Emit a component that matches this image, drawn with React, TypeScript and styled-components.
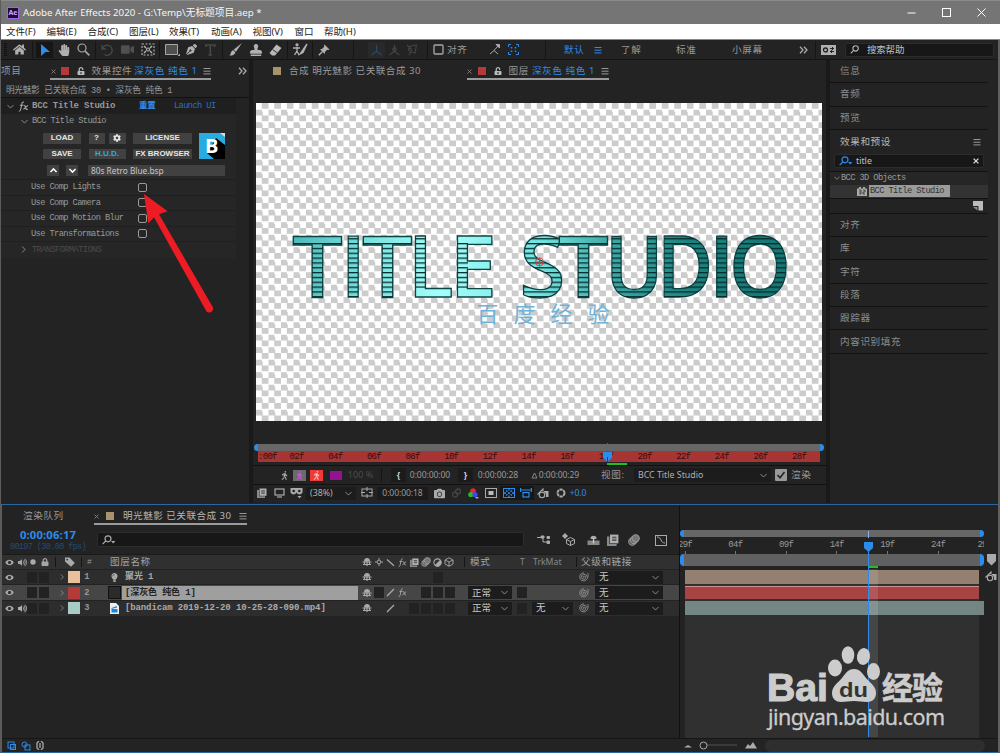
import React from 'react';
import styled, { createGlobalStyle } from 'styled-components';
import { FaHome, FaHandPaper, FaVideo, FaPenNib, FaStamp, FaCog, FaWalking, FaCamera, FaTag, FaLock, FaUnlockAlt, FaVolumeUp, FaLightbulb } from 'react-icons/fa';

const ui = `'Noto Sans','Noto Sans CJK SC',sans-serif`;
const mono = `'Liberation Mono','Noto Sans CJK SC',monospace`;
const blue = '#2d8ceb';

const Global = createGlobalStyle`
  *{box-sizing:border-box}
  body{margin:0;background:#232323;overflow:hidden}
  svg{flex:none;display:block}
`;

const Window = styled.div`
  position:relative;width:1000px;height:753px;background:#232323;color:#999;
  font:9.5px/12px ${ui};display:flex;flex-direction:column;white-space:nowrap;overflow:hidden;
  border-left:1px solid #5c5c5c;
`;
const TitleBar = styled.header`
  height:24px;flex:none;background:#757575;border-top:1px solid #8a8a8a;color:#f4f4f4;
  display:flex;align-items:center;padding:0 14px 0 6px;font-size:9.7px;gap:4px;
`;
const AppBadge = styled.span`
  width:12px;height:12px;border:1px solid #9a6be0;background:#1f0a3d;color:#c9a4ff;
  font-size:7px;font-weight:700;line-height:9px;text-align:center;
`;
const WindowButtons = styled.div`
  margin-left:auto;display:flex;gap:26px;align-items:center;
`;
const MenuBar = styled.nav`
  height:16px;flex:none;background:#fff;border-bottom:1px solid #888;color:#222;
  display:flex;align-items:center;padding-left:5px;line-height:15px;
`;
const MenuItem = styled.span<{ $w: number }>`width:${p => p.$w}px;flex:none;`;
const ToolBar = styled.div`
  height:20px;flex:none;display:flex;align-items:center;border-bottom:1px solid #151515;padding-left:0;
`;
const Cell = styled.span<{ $w: number; $start?: boolean; $c?: string; $bg?: string; $h?: number }>`
  width:${p => p.$w}px;height:${p => p.$h ? p.$h + 'px' : 'auto'};flex:none;display:flex;align-items:center;
  justify-content:${p => (p.$start ? 'flex-start' : 'center')};
  color:${p => p.$c || 'inherit'};background:${p => p.$bg || 'transparent'};
`;
const Gap = styled.i<{ $h: number }>`height:${p => p.$h}px;flex:none;`;
const Sep = styled.i<{ $l: number; $r: number; $h?: number }>`
  width:1px;height:${p => p.$h || 18}px;flex:none;background:#151515;margin:0 ${p => p.$r}px 0 ${p => p.$l}px;
`;
const Wide = styled.span<{ $ls?: number; $c?: string; $size?: number; $bold?: boolean; $ml?: number; $grow?: boolean }>`
  letter-spacing:${p => p.$ls ?? 0.6}px;color:${p => p.$c || 'inherit'};
  font-size:${p => p.$size || 9.6}px;font-weight:${p => (p.$bold ? 700 : 400)};
  margin-left:${p => p.$ml || 0}px;flex:${p => (p.$grow ? '1' : 'none')};
`;
const Mono = styled.span<{ $c?: string; $bold?: boolean; $ls?: number; $size?: number }>`
  font-family:${mono};font-size:${p => p.$size || 8.7}px;letter-spacing:${p => p.$ls ?? -0.59}px;
  color:${p => p.$c || '#999'};font-weight:${p => (p.$bold ? 700 : 400)};
`;
const SearchBox = styled.div<{ $w: number; $h: number; $mt?: number }>`
  width:${p => p.$w}px;height:${p => p.$h}px;flex:none;background:#171717;border:1px solid #2c2c2c;border-radius:2px;
  display:flex;align-items:center;padding:0 4px;color:#c2c2c2;margin-top:${p => p.$mt || 0}px;
`;
const Panels = styled.div`
  height:443px;flex:none;display:flex;gap:4px;background:#191919;
`;
const Panel = styled.section<{ $w: number }>`
  width:${p => p.$w}px;flex:none;background:#232323;display:flex;flex-direction:column;overflow:hidden;
`;
const TabRow = styled.div<{ $h: number }>`height:${p => p.$h}px;flex:none;display:flex;align-items:stretch;`;
const Tab = styled.div<{ $w: number; $ml?: number; $active?: boolean }>`
  width:${p => p.$w}px;margin-left:${p => p.$ml || 0}px;flex:none;display:flex;align-items:center;padding-top:4px;
  border-bottom:2px solid ${p => (p.$active ? '#9b9b9b' : 'transparent')};
`;
const Swatch = styled.i<{ $c: string; $s?: number; $ml?: number; $mr?: number }>`
  width:${p => p.$s || 8}px;height:${p => p.$s || 8}px;flex:none;background:${p => p.$c};
  margin:0 ${p => p.$mr || 0}px 0 ${p => p.$ml || 0}px;
`;

/* Effect controls */
const Crumb = styled.div`height:18px;flex:none;padding:4px 0 0 5px;border-bottom:1px solid #111;`;
const FxRow = styled.div<{ $h: number; $bg?: string; $pl?: number; $line?: boolean }>`
  height:${p => p.$h}px;width:235px;flex:none;display:flex;align-items:center;padding-left:${p => p.$pl || 0}px;
  background:${p => p.$bg || '#262626'};border-bottom:${p => (p.$line ? '1px solid #1f1f1f' : '0')};
`;
const Deck = styled.div`
  width:235px;height:52px;flex:none;background:#262626;display:grid;padding:5px 0 0 42px;border-bottom:1px solid #1f1f1f;
  grid-template-columns:149px 26px;column-gap:7px;grid-template-rows:26px 11px;row-gap:6px;
`;
const DeckButtons = styled.div`display:flex;flex-direction:column;justify-content:space-between;`;
const DeckLine = styled.div`display:flex;justify-content:space-between;`;
const Btn = styled.button<{ $w: number; $c?: string; $ml?: number }>`
  width:${p => p.$w}px;height:10.5px;padding:0;border:0;background:#414141;color:${p => p.$c || '#e6e6e6'};
  font:bold 8px/10px 'Liberation Sans',sans-serif;display:flex;align-items:center;justify-content:center;
  margin:0 0 0 ${p => p.$ml || 0}px;
`;
const Pair = styled.div`display:flex;gap:4px;`;
const DeckField = styled.div`display:flex;align-items:center;grid-column:1 / 3;padding-left:4px;`;
const FileName = styled.span`
  width:137px;height:11px;margin-left:10px;background:#414141;color:#c9c9c9;padding-left:3px;line-height:11px;font-size:8.3px;
`;
const Check = styled.i`width:9px;height:9px;flex:none;border:1px solid #9a9a9a;border-radius:2px;`;

/* Viewer */
const Stage = styled.div`
  width:566px;height:318px;margin:23px 0 0 3px;flex:none;
  background:#fff conic-gradient(#ccc 25%,#fff 0 50%,#ccc 0 75%,#fff 0) 0 0/12.500px 12.500px;
`;
const MiniScroll = styled.div<{ $ml: number; $w: number; $h: number; $bg?: string }>`
  margin-left:${p => p.$ml}px;width:${p => p.$w}px;height:${p => p.$h}px;flex:none;display:flex;background:${p => p.$bg || '#676767'};
  border:solid ${blue};border-width:0 4px;border-radius:4px;
`;
const RedRuler = styled.div`
  width:562px;height:11px;margin-left:5px;flex:none;background:#a63533;display:flex;overflow:hidden;
`;
const RulerMark = styled.span<{ $w: number; $start?: boolean }>`
  width:${p => p.$w}px;flex:none;display:flex;justify-content:${p => (p.$start ? 'flex-start' : 'center')};
  font:9px/12px ${mono};letter-spacing:-.7px;color:#330f0f;
`;
const Bar = styled.div<{ $h: number }>`
  height:${p => p.$h}px;flex:none;display:flex;align-items:center;border-top:1px solid #111;font-size:8.8px;
`;
const Select = styled.span<{ $w: number; $ml?: number; $h?: number; $c?: string }>`
  width:${p => p.$w}px;height:${p => p.$h || 13}px;margin-left:${p => p.$ml || 0}px;flex:none;background:#1c1c1c;
  display:flex;align-items:center;justify-content:space-between;padding:0 4px;color:${p => p.$c || '#b0b0b0'};
`;

/* Side panels */
const SideRow = styled.div<{ $h?: number; $bright?: boolean; $plain?: boolean }>`
  height:${p => p.$h || 23.3}px;width:158px;flex:none;display:flex;align-items:center;padding-left:10px;
  border-bottom:${p => (p.$plain ? '0' : '1px solid #121212')};color:${p => (p.$bright ? '#b5b5b5' : '#8c8c8c')};
`;
const SideSearch = styled.div`padding:0 0 3px 4px;border-bottom:1px solid #121212;width:158px;`;
const SideFoot = styled.div`
  height:16px;width:158px;flex:none;display:flex;align-items:center;justify-content:flex-end;padding-right:5px;
  border:solid #121212;border-width:1px 0;
`;
const TreeRow = styled.div<{ $bg?: string }>`
  height:13px;width:158px;flex:none;display:flex;align-items:center;padding-left:4px;background:${p => p.$bg || '#262626'};
`;
const Hit = styled.span`background:#9b9b9b;height:12px;width:81px;padding-left:1px;display:flex;align-items:center;margin-left:2px;`;

/* Timeline */
const Timeline = styled.section`
  height:249px;width:998px;flex:none;margin-top:1px;border:1.5px solid #2b67a5;display:flex;flex-direction:column;
  background:#232323;position:relative;
`;
const TLBody = styled.div`display:flex;flex:1;min-height:0;`;
const Outline = styled.div`width:678px;flex:none;display:flex;flex-direction:column;border-right:1px solid #111;`;
const TimeTop = styled.div`height:29px;flex:none;display:flex;`;
const TimeCode = styled.div`width:92px;flex:none;text-align:center;display:flex;flex-direction:column;padding-top:4px;`;
const Header = styled.div`
  height:15px;flex:none;display:flex;align-items:center;background:#303030;border-top:1px solid #1a1a1a;color:#a5a5a5;
`;
const Layers = styled.div`display:flex;flex-direction:column;padding-top:.8px;background:#222;`;
const LayerRow = styled.div<{ $sel?: boolean }>`
  height:15.6px;flex:none;display:flex;align-items:center;background:${p => (p.$sel ? '#464646' : '#2d2d2d')};
  border-bottom:1px solid #222;color:#b0b0b0;
`;
const Box = styled.i<{ $r?: number }>`
  width:10px;height:11px;flex:none;background:#222;margin-right:${p => p.$r || 0}px;
`;
const LayerName = styled.span<{ $sel?: boolean }>`
  width:236px;height:14px;flex:none;display:flex;align-items:center;padding-left:3px;
  background:${p => (p.$sel ? '#9f9f9f' : 'transparent')};
`;
const Tracks = styled.div`width:304px;flex:none;display:flex;flex-direction:column;padding-top:25px;`;
const TickRow = styled.div`height:14px;flex:none;display:flex;overflow:hidden;margin-top:3px;`;
const Tick = styled.span<{ $w: number }>`
  width:${p => p.$w}px;flex:none;display:flex;flex-direction:column;align-items:center;
  font:9px/11px ${mono};letter-spacing:-.7px;color:#999;
  &::after{content:'';width:1px;height:3px;background:#777;}
`;
const TrackArea = styled.div`
  flex:1;margin:4px 5px 0 5px;background:#303030;display:flex;flex-direction:column;
`;
const Clip = styled.div<{ $c: string; $w: number; $top?: string }>`
  height:13.6px;width:${p => p.$w}px;flex:none;margin-bottom:2px;background:${p => p.$c};
  border-top:1px solid ${p => p.$top || 'transparent'};
`;
const Markers = styled.div`
  width:14px;flex:none;display:flex;flex-direction:column;align-items:center;padding-top:49px;gap:5px;
`;
const Footer = styled.div`height:14px;flex:none;display:flex;align-items:center;border-top:1px solid #161616;`;
const Scroll = styled.span`width:220px;height:12px;border-radius:6px;background:#2e2e2e;`;
const Overlay = styled.svg<{ $x: number; $y: number }>`position:absolute;left:${p => p.$x}px;top:${p => p.$y}px;pointer-events:none;`;

const Chevron = ({ c = '#999', s = 7, dir = 'down', w = 1 }: { c?: string; s?: number; dir?: 'down' | 'right' | 'up'; w?: number }) => (
  <svg width={s} height={s} viewBox="0 0 8 8" fill="none" stroke={c} strokeWidth={w}>
    <path d={dir === 'down' ? 'M.5 2.2 4 5.8 7.5 2.2' : dir === 'up' ? 'M.5 5.8 4 2.2 7.5 5.8' : 'M2.4.6 5.8 4 2.4 7.4'} />
  </svg>
);
const Burger = ({ c = '#999' }: { c?: string }) => (
  <svg width="8" height="8" viewBox="0 0 8 8" stroke={c}><path d="M.5 1.5h7M.5 4.2h7M.5 6.9h7" /></svg>
);
const Cross = ({ c = '#888', s = 5, w = 1 }: { c?: string; s?: number; w?: number }) => (
  <svg width={s} height={s} viewBox="0 0 6 6" stroke={c} strokeWidth={w}><path d="M.6.6l4.8 4.8M5.4.6.6 5.4" /></svg>
);
const Lens = ({ c = '#bbb', s = 10, caret = false }: { c?: string; s?: number; caret?: boolean }) => (
  <svg width={s + 4} height={s} viewBox="0 0 14 10" fill="none" stroke={c} strokeWidth="1.2">
    <circle cx="6" cy="3.8" r="3" /><path d="M3.8 6 .6 9.2" />
    {caret && <path d="M9 6h4.4L11.2 8.4z" fill={c} stroke="none" />}
  </svg>
);
const More = () => (
  <svg width="9" height="8" viewBox="0 0 9 8" fill="none" stroke="#aaa" strokeWidth="1.3"><path d="M1 .8 4 4 1 7.2M5 .8 8 4 5 7.2" /></svg>
);
const Axis = ({ c, k }: { c: string; k: number }) => (
  <svg width="13" height="12" viewBox="0 0 13 12" fill="none" stroke={c} strokeWidth="1.1">
    {k < 2 ? <path d="M6.5 1v6.2M6.5 7.2 1.5 11M6.5 7.2l5 3.8" /> : <path d="M3 2.5 10.5 1 9 9 2.5 6.5zM1 1l5 5M3 11l3-5" />}
    {k === 1 && <circle cx="6.5" cy="5.5" r="1.8" />}
  </svg>
);
const Shy = ({ s = 10 }: { s?: number }) => (
  <svg width={s} height={s} viewBox="0 0 10 10">
    <path d="M2 4.600C1.800 2.200 3 1 5 1s3.200 1.200 3 3.600z" fill="#aaa" /><path d="M.5 5h9M5 4v5M1 7.500h8M2.500 5v2.500M7.500 5v2.500" fill="none" stroke="#aaa" strokeWidth="1.200" />
  </svg>
);
const ShyRow = () => (
  <svg width="13" height="10" viewBox="0 0 13 10">
    <path d="M3.500 4C3.300 2 4.500.8 6.500.8S9.700 2 9.500 4z" fill="#aaa" /><path d="M.5 5.500h12V10H.5z" fill="#888" /><path d="M6.500 3v5.500" stroke="#ccc" strokeWidth="1.300" />
  </svg>
);
const Frames = ({ s = 10 }: { s?: number }) => (
  <svg width={s} height={s} viewBox="0 0 10 10"><path d="M0 2h2v6.300h6V10H0z" fill="#8a8a8a" /><path d="M2.500.5h7v7.300h-7z" fill="#b0b0b0" /><path d="M4.300 2.200h3.500v3.600H4.300z" fill="#555" /><path d="M4.300 4h3.500" stroke="#b0b0b0" strokeWidth=".8" /></svg>
);
const Blur = ({ s = 10 }: { s?: number }) => (
  <svg width={s} height={s} viewBox="0 0 10 10" stroke="#999" strokeWidth=".9"><circle cx="3.600" cy="6.400" r="3" fill="#555" /><circle cx="5" cy="5" r="3" fill="#666" /><circle cx="6.400" cy="3.600" r="3" fill="#777" /></svg>
);
const Half = () => (
  <svg width="9" height="9" viewBox="0 0 10 10"><circle cx="5" cy="5" r="4" fill="none" stroke="#aaa" strokeWidth="1.2" /><path d="M2 8a4 4 0 0 0 6-6z" fill="#aaa" /></svg>
);
const Cube = ({ s = 10 }: { s?: number }) => (
  <svg width={s} height={s} viewBox="0 0 10 10" fill="none" stroke="#aaa" strokeWidth=".9"><path d="M5 .8 9 3v4L5 9.3 1 7V3zM1 3l4 2 4-2M5 5v4.2" /></svg>
);
const Slash = ({ flip = false }: { flip?: boolean }) => (
  <svg width="9" height="9" viewBox="0 0 9 9" stroke="#aaa" strokeWidth="1.2"><path d={flip ? 'M1 1.5 8 7.8' : 'M1 8 8 1'} /></svg>
);
const Sun = () => (
  <svg width="8" height="8" viewBox="0 0 9 9" fill="none" stroke="#aaa" strokeWidth="1.100"><circle cx="4.500" cy="4.500" r="2.100" /><path d="M4.500 0v2M4.500 7v2M0 4.500h2M7 4.500h2" /></svg>
);
const Spiral = () => (
  <svg width="10" height="10" viewBox="0 0 10 10" fill="none" stroke="#999" strokeWidth=".9">
    <path d="M5.2 5.4c-.8.4-1.4-.8-.4-1.2 1.4-.5 2.4 1 1.6 2.2-1 1.4-3.6.9-3.8-1.2C2.4 3 4.400 1.800 6.200 2.400c1 .4 1.600 1.200 1.700 2.300M8.900 1.200c.8 3.800-.8 7.600-4.400 7.600C2 8.800.7 6.800.8 4.800.900 2.600 2.600.800 5 .8" />
  </svg>
);
const Fx = ({ s = 11, c = '#aaa' }: { s?: number; c?: string }) => (
  <svg width={s} height={s} viewBox="0 0 11 11" fill="none" stroke={c} strokeWidth="1.1">
    <path d="M.8 10.300c1.400.2 1.700-1 2-2.300l1-5c.3-1.400.8-2.300 2.200-1.900M1.800 4.200h3.400M5.600 4.300c1.500-.3 1.700.7 2 2.100s.6 2.300 2.200 1.900M10 4.400 5.400 8.400" />
  </svg>
);
const Aperture = () => (
  <svg width="10" height="10" viewBox="0 0 10 10" fill="none" stroke="#aaa"><circle cx="5" cy="5" r="3.500" strokeWidth="2" strokeDasharray="3.100 .56" /></svg>
);
const Recycle = () => (
  <svg width="12" height="11" viewBox="0 0 12 11" fill="none" stroke="#aaa" strokeWidth="1.100"><circle cx="5" cy="7" r="2.700" /><path d="M.5 6.500 6 1v2.500" /><path d="M7 3h4.500v6H8.700A4 4 0 0 0 7 4z" fill="#aaa" stroke="none" /></svg>
);
const Eye = () => (
  <svg width="9" height="7" viewBox="0 0 9 7"><path d="M.3 3.500C2-.2 7-.2 8.700 3.500 7 7.200 2 7.200.3 3.500z" fill="#aaa" /><circle cx="4.500" cy="3.500" r="1.700" fill="#333" /></svg>
);

const menu: [string, number][] = [['文件(F)', 40.500], ['编辑(E)', 41], ['合成(C)', 41.500], ['图层(L)', 40], ['效果(T)', 42], ['动画(A)', 41.500], ['视图(V)', 42], ['窗口', 29.500], ['帮助(H)', 40]];

const Tools = () => (
  <ToolBar>
    <Cell $w={9}><svg width="3" height="14"><path d="M1.500 0v14" stroke="#111" strokeWidth="3" strokeDasharray="1 1" /></svg></Cell>
    <Cell $w={19}><FaHome size={13} color="#b0b0b0" /></Cell>
    <Sep $l={3} $r={3} />
    <Cell $w={17} $h={16} $bg="#161616"><svg width="10" height="12" viewBox="0 0 10 12"><path d="M1 0l9 8H5.500L1 12z" fill={blue} /></svg></Cell>
    <Cell $w={21}><FaHandPaper size={12} color="#b0b0b0" /></Cell>
    <Cell $w={19}><svg width="13" height="13" viewBox="0 0 13 13" fill="none" stroke="#a8a8a8"><circle cx="5" cy="5" r="4" strokeWidth="1.200" /><path d="M8 8l4.300 4.300" strokeWidth="1.700" /></svg></Cell>
    <Sep $l={2} $r={2} />
    <Cell $w={19}><svg width="13" height="12" viewBox="0 0 13 12" fill="none" stroke="#484848" strokeWidth="1.300"><path d="M1 1v4h4M1.500 4.500a5 5 0 1 1 2 6" /></svg></Cell>
    <Cell $w={21}><FaVideo size={13} color="#505050" /></Cell>
    <Cell $w={19}><svg width="14" height="13" viewBox="0 0 14 13" fill="none" stroke="#b0b0b0" strokeWidth="1.200"><rect x="1" y="1" width="12" height="11" strokeDasharray="2 1.500" /><circle cx="7" cy="6.500" r="1.500" /><path d="M3 3l2 2M11 3 9 5M3 10l2-2M11 10 9 8" strokeWidth="1.500" /></svg></Cell>
    <Sep $l={2} $r={2} />
    <Cell $w={20}><svg width="15" height="12" viewBox="0 0 15 12"><path d="M.5.500h12v10H.5z" fill="#505050" stroke="#a8a8a8" /><path d="M15 9.500V12h-2.500z" fill="#a8a8a8" /></svg></Cell>
    <Cell $w={19}><FaPenNib size={11} color="#b0b0b0" /></Cell>
    <Cell $w={19}><svg width="12" height="12" viewBox="0 0 12 12" stroke="#484848" strokeWidth="1.600" fill="none"><path d="M.8 3V1h9v2M5.300 1v10M3.500 11h3.600" /></svg></Cell>
    <Sep $l={2} $r={2} />
    <Cell $w={21}><svg width="13" height="13" viewBox="0 0 13 13" fill="#b0b0b0"><path d="M13 0 7 8.800 4.600 6.700z" /><path d="M4.200 7.200 6.400 9.200C6 11.700 3.500 12.700.3 12.500 2.300 11 1.600 7.600 4.200 7.200z" /></svg></Cell>
    <Cell $w={19}><FaStamp size={12} color="#b0b0b0" /></Cell>
    <Cell $w={20}><svg width="13" height="12" viewBox="0 0 13 12"><path d="M7.500.5 12.500 4 6 11.500H3L.5 9z" fill="#b8b8b8" /><path d="M3.500 5.500 8.500 9" stroke="#333" /></svg></Cell>
    <Sep $l={2} $r={2} />
    <Cell $w={20}><svg width="15" height="13" viewBox="0 0 15 13" fill="none" stroke="#b0b0b0" strokeWidth="1.300"><circle cx="4" cy="1.800" r="1" fill="#b0b0b0" /><path d="M0 5h7M4 4v4L1.500 12M4 8l2 4" /><path d="M14 1 9 8l-2 3 3-1.500z" fill="#b0b0b0" /></svg></Cell>
    <Sep $l={2} $r={2} />
    <Cell $w={18}><svg width="12" height="12" viewBox="0 0 12 12"><path d="M6.500.5l5 5-1.200.5-1.200-.2L7 8l-.2 2L2 5.200 4 5l2.200-2.200L6 1.500z" fill="#b0b0b0" /><path d="M4.500 7.500.8 11.200" stroke="#b0b0b0" strokeWidth="1.300" /></svg></Cell>
    <Sep $l={20} $r={14} />
    <Cell $w={17} $h={16} $bg="#292929"><Axis c="#274a6e" k={0} /></Cell>
    <Cell $w={18}><Axis c="#454545" k={1} /></Cell>
    <Cell $w={18}><Axis c="#454545" k={2} /></Cell>
    <Sep $l={6} $r={5} />
    <Cell $w={11}><svg width="11" height="11"><rect x="1" y="1" width="9" height="9" rx="1" fill="none" stroke="#a8a8a8" strokeWidth="1.300" /></svg></Cell>
    <Cell $w={43} $start><Wide $ml={3}>对齐</Wide></Cell>
    <Cell $w={15}><svg width="11" height="11" viewBox="0 0 11 11" fill="none" stroke="#a8a8a8"><path d="M1 10l4-3.500 4 3.500M5 6.500 9 2" /><path d="M7 .5h3.500V4z" fill="#a8a8a8" /></svg></Cell>
    <Cell $w={22}><svg width="11" height="11" viewBox="0 0 11 11" fill="none" stroke={blue}><path d="M3 .5H.5V3M8 .5h2.500V3M3 10.500H.5V8M8 10.500h2.500V8" /><path d="M3.500 3v5.500M7.500 3v5.500" strokeWidth="1.500" strokeDasharray="1.500 2" /></svg></Cell>
    <Sep $l={21} $r={18} />
    <Cell $w={30} $start $c={blue}><Wide>默认</Wide></Cell>
    <Cell $w={27} $start><Burger c={blue} /></Cell>
    <Cell $w={55} $start><Wide>了解</Wide></Cell>
    <Cell $w={56} $start><Wide>标准</Wide></Cell>
    <Cell $w={67} $start><Wide>小屏幕</Wide></Cell>
    <Cell $w={9}><More /></Cell>
    <Sep $l={7} $r={4} />
    <Cell $w={16}><svg width="15" height="10" viewBox="0 0 15 10"><rect width="15" height="10" fill="#b0b0b0" /><circle cx="4.500" cy="5" r="2" fill="none" stroke="#222" strokeWidth="1.300" /><path d="M9 3.500h4M9 6.500h4M11.500 2v3M10.500 5v3" stroke="#222" /></svg></Cell>
    <Cell $w={9} />
    <SearchBox $w={149} $h={14}><Lens s={9} /><Wide $ls={-0.2} $size={9.500} $ml={4}>搜索帮助</Wide></SearchBox>
  </ToolBar>
);

const EffectControls = () => (
  <Panel $w={248}>
    <TabRow $h={20}>
      <Tab $w={49}><Wide>项目</Wide></Tab>
      <Tab $w={161} $active>
        <Cell $w={6}><Cross /></Cell><Swatch $c="#b33a38" $ml={5} $mr={8} /><FaUnlockAlt size={8} color="#bbb" />
        <Wide $ml={6.500}>效果控件</Wide><Wide $c={blue} $ml={2} $grow>深灰色 纯色 1</Wide><Burger />
      </Tab>
      <Tab $w={38}><Cell $w={62}><More /></Cell></Tab>
    </TabRow>
    <Crumb><Mono $size={8.600} $ls={-0.240}>明光魅影 已关联合成 30 • 深灰色 纯色 1</Mono></Crumb>
    <FxRow $h={16} $bg="#1f1f1f" $pl={5}>
      <Cell $w={9}><Chevron /></Cell><Cell $w={17}><Fx /></Cell>
      <Cell $w={107} $start><Mono $bold $size={9} $ls={-0.200}>BCC Title Studio</Mono></Cell>
      <Cell $w={35} $start><Mono $c={blue} $bold $size={8.500} $ls={-0.2}>重置</Mono></Cell><Mono $c="#2672c4">Launch UI</Mono>
    </FxRow>
    <FxRow $h={14} $pl={20}><Cell $w={11} $start><Chevron /></Cell><Mono>BCC Title Studio</Mono></FxRow>
    <Deck>
      <DeckButtons>
        <DeckLine><Btn $w={38}>LOAD</Btn><Pair><Btn $w={16}>?</Btn><Btn $w={17}><FaCog size={8} /></Btn></Pair><Btn $w={59}>LICENSE</Btn></DeckLine>
        <DeckLine><Btn $w={38}>SAVE</Btn><Btn $w={37} $c="#29abe2">H.U.D.</Btn><Btn $w={59}>FX BROWSER</Btn></DeckLine>
      </DeckButtons>
      <svg width="26" height="26" viewBox="0 0 26 26">
        <rect width="26" height="26" fill="#29abe2" /><path d="M17 5 26 12v14H15L8 20z" fill="#000" /><path d="M21 0h5v4z" fill="#ddd" />
        <text x="6" y="20" fontFamily="Open Sans" fontWeight="700" fontSize="20" fill="#fff">B</text>
      </svg>
      <DeckField>
        <Btn $w={12}><Chevron c="#fff" w={1.800} dir="up" /></Btn><Btn $w={12} $ml={7}><Chevron c="#fff" w={1.800} /></Btn>
        <FileName>80s Retro Blue.bsp</FileName>
      </DeckField>
    </Deck>
    {['Use Comp Lights', 'Use Comp Camera', 'Use Comp Motion Blur', 'Use Transformations'].map(t => (
      <FxRow key={t} $h={15.500} $pl={30} $line><Cell $w={107} $start><Mono>{t}</Mono></Cell><Check /></FxRow>
    ))}
    <FxRow $h={15.500} $pl={19}><Cell $w={12} $start><Chevron dir="right" /></Cell><Mono $c="#4a4a4a">TRANSFORMATIONS</Mono></FxRow>
  </Panel>
);

/* letter, x origin, horizontal scale */
const letters: [string, number, number][] = [
  ['T', 292, 1.060], ['I', 340.200, 1], ['T', 362, 1.060], ['L', 407.500, 1], ['E', 449.500, 1], ['S', 519.500, 0.980],
  ['T', 558, 1.060], ['U', 604.900, 0.925], ['D', 657, 0.900], ['I', 708.700, 1], ['O', 729.300, 0.920],
];
const TitleArt = () => (
  <svg width="566" height="318" viewBox="256 103 566 318">
    <defs>
      {letters.map(([, x, s], i) => (
        <linearGradient key={i} id={'teal' + i} gradientUnits="userSpaceOnUse" x1={(292 - x) / s} x2={(788 - x) / s} y1="0" y2="0">
          <stop offset="0" stopColor="#4fb8b8" /><stop offset=".14" stopColor="#74e0de" /><stop offset=".3" stopColor="#a5fffb" /><stop offset=".5" stopColor="#74e4e0" />
          <stop offset=".64" stopColor="#3fa9a6" /><stop offset=".8" stopColor="#1e8380" /><stop offset="1" stopColor="#157672" />
        </linearGradient>
      ))}
      <pattern id="lines" patternUnits="userSpaceOnUse" width="10" height="4.830" y="243"><rect width="10" height="1.300" fill="#052a2a" /></pattern>
      <clipPath id="stems">
        <rect x="290" y="242" width="54" height="60" /><rect x="344" y="230" width="17" height="70" /><rect x="361" y="242" width="52" height="60" />
        <rect x="413" y="230" width="42" height="58" /><rect x="455" y="243" width="13" height="45" /><rect x="518" y="230" width="40.500" height="70" />
        <rect x="558.500" y="242" width="51" height="60" /><rect x="609.500" y="230" width="190" height="70" />
      </clipPath>
      <clipPath id="glyphs">
        {letters.map(([l, x, s], i) => <text key={i} fontFamily="Open Sans" fontWeight="600" fontSize="85" transform={`translate(${x} 297) scale(${s} 1)`}>{l}</text>)}
      </clipPath>
    </defs>
    <g fontFamily="Open Sans" fontWeight="600" fontSize="85">
      {letters.map(([l, x, s], i) => <text key={i} transform={`translate(${x} 297) scale(${s} 1)`} fill={`url(#teal${i})`} stroke="#0c4545" strokeWidth="1.300">{l}</text>)}
    </g>
    <g clipPath="url(#stems)"><rect x="290" y="230" width="505" height="72" fill="url(#lines)" clipPath="url(#glyphs)" /></g>
    <text fontFamily="Noto Sans CJK SC" fontSize="22" fill="#6fb3d8" x="476.5 513.5 550.5 587.5" y="322">百度经验</text>
    <g fill="none" stroke="#d33" strokeWidth=".9"><circle cx="539.500" cy="262" r="4" /><path d="M535.500 262h8M539.500 258v8" /></g>
  </svg>
);

const Viewer = () => (
  <Panel $w={573}>
    <TabRow $h={20}>
      <Tab $w={214}><Swatch $c="#a8936f" $ml={20} $mr={8} /><Wide $ls={0.500}>合成 明光魅影 已关联合成 30</Wide></Tab>
      <Tab $w={142} $active>
        <Cell $w={4}><Cross /></Cell><Swatch $c="#b33a38" $ml={7} $mr={8} /><FaUnlockAlt size={8} color="#bbb" />
        <Wide $ml={6.500}>图层</Wide><Wide $c={blue} $ml={3} $grow>深灰色 纯色 1</Wide><Burger />
      </Tab>
    </TabRow>
    <Stage><TitleArt /></Stage>
    <Gap $h={23} />
    <MiniScroll $ml={1} $w={570} $h={7} />
    <RedRuler>
      <RulerMark $w={19.300} $start>:00f</RulerMark>
      {['02', '04', '06', '08', '10', '12', '14', '16', '18', '20', '22', '24', '26', '28'].map(n => <RulerMark key={n} $w={38.670}>{n}f</RulerMark>)}
    </RedRuler>
    <Gap $h={3} />
    <Bar $h={19}>
      <Cell $w={22} /><Cell $w={18}><FaWalking size={9} color="#aaa" /></Cell>
      <Cell $w={13} $h={11} $bg="#6b6b6b"><FaWalking size={9} color="#d44fe0" /></Cell><Cell $w={4} />
      <Cell $w={13} $h={11} $bg="#f03a3a"><FaWalking size={9} color="#ffc0b0" /></Cell><Cell $w={7} />
      <Cell $w={12} $h={9} $bg="#931393" /><Cell $w={37} $c="#4c4c4c"><Wide $ls={0} $size={9}>100 %</Wide></Cell>
      <Sep $l={2} $r={9} $h={14} />
      <Cell $w={15} $h={14} $bg="#1b1b1b" $c="#ccc"><b>{'{'}</b></Cell><Cell $w={48}><Wide $ls={-0.1} $size={8.600}>0:00:00:00</Wide></Cell><Cell $w={4} />
      <Cell $w={15} $h={14} $bg="#1b1b1b" $c="#ccc"><b>{'}'}</b></Cell><Cell $w={50}><Wide $ls={-0.1} $size={8.600}>0:00:00:28</Wide></Cell>
      <Cell $w={64}><svg width="7" height="7" viewBox="0 0 7 7"><path d="M3.500 1 6 6H1z" fill="none" stroke="#888" /></svg><Wide $ls={-0.1} $size={8.600} $ml={1}>0:00:00:29</Wide></Cell>
      <Cell $w={47}>&nbsp;&nbsp;<Wide>视图:</Wide></Cell>
      <Select $w={137} $h={14}>BCC Title Studio<Chevron /></Select>
      <Cell $w={20}><svg width="12" height="12" viewBox="0 0 12 12"><rect width="12" height="12" rx="1" fill="#999" /><path d="M2.500 6 5 8.800 9.500 3" fill="none" stroke="#222" strokeWidth="1.600" /></svg></Cell>
      <Wide>渲染</Wide>
    </Bar>
    <Bar $h={17}>
      <Cell $w={18}><Frames /></Cell>
      <Cell $w={17}><svg width="11" height="10" viewBox="0 0 11 10" fill="none" stroke="#aaa" strokeWidth="1.200"><rect x="1" y="1" width="9" height="6" /><path d="M3 9h5" /></svg></Cell>
      <Cell $w={17}><svg width="13" height="12" viewBox="0 0 13 12"><path d="M.5 1h12v4.500C11 8 8 8 6.500 5.500 5 8 2 8 .5 5.500z" fill="#aaa" /><circle cx="3.700" cy="4" r="1.300" fill="#222" /><circle cx="9.300" cy="4" r="1.300" fill="#222" /><path d="M7.500 9h4L9.500 11.500z" fill="#aaa" /></svg></Cell>
      <Select $w={50} $ml={1}>(38%)<Chevron /></Select>
      <Cell $w={21}><svg width="12" height="12" viewBox="0 0 12 12" fill="none" stroke="#aaa"><rect x="1" y="2" width="10" height="7" /><path d="M6 0v4M6 7v4M0 5.500h4M8 5.500h4" /></svg></Cell>
      <Cell $w={51} $h={13} $bg="#1b1b1b"><Wide $ls={-0.1} $size={8.600}>0:00:00:18</Wide></Cell><Cell $w={2} />
      <Cell $w={18}><FaCamera size={11} color="#aaa" /></Cell>
      <Cell $w={17}><svg width="11" height="10" viewBox="0 0 11 10" fill="none" stroke="#444" strokeWidth="1.300"><circle cx="4" cy="6.500" r="2.500" /><circle cx="7" cy="3.500" r="2.500" /></svg></Cell>
      <Cell $w={17}><svg width="11" height="11" viewBox="0 0 11 11"><circle cx="5" cy="3" r="2.800" fill="#e22" /><circle cx="2.800" cy="6.500" r="2.600" fill="#2b2" /><circle cx="7" cy="6.500" r="2.600" fill="#44f" /><path d="M7 9h4l-2 2z" fill="#aaa" /></svg></Cell>
      <Cell $w={18}><svg width="12" height="10"><rect x=".5" y=".5" width="11" height="9" fill="none" stroke="#aaa" /><rect x="3.500" y="3" width="5" height="4" fill="#bbb" /></svg></Cell>
      <Cell $w={17} $h={14} $bg="#171717"><svg width="12" height="10" fill="none" stroke={blue}><rect x=".5" y=".5" width="11" height="9" /><path d="M3 2.500l6 5M9 2.500l-6 5M1 5h2M9 5h2M6 1v1.500M6 7.500V9" strokeWidth="1.300" strokeDasharray="2 1" /></svg></Cell>
      <Cell $w={17} $h={14} $bg="#171717"><svg width="12" height="10" fill="none" stroke={blue} strokeWidth="1.200"><path d="M.6 0v4M11.400 0v4M1 2h10" /><rect x="3" y="4.500" width="6" height="4.500" /></svg></Cell>
      <Cell $w={18}><Recycle /></Cell><Cell $w={17}><Aperture /></Cell>
      <Cell $w={18} $c={blue}><Wide $ls={-0.1} $size={8.600}>+0.0</Wide></Cell>
    </Bar>
  </Panel>
);

const SidePanels = () => (
  <Panel $w={168}>
    {['信息', '音频', '预览'].map(t => <SideRow key={t}><Wide>{t}</Wide></SideRow>)}
    <SideRow $bright $plain $h={24}><Wide $grow>效果和预设</Wide><Burger /><Cell $w={7} /></SideRow>
    <SideSearch>
      <SearchBox $w={150} $h={14}><Lens c={blue} caret /><Wide $ml={3} $ls={0} $size={8.800} $grow>title</Wide><Cross c="#ddd" s={6} w={1.300} /></SearchBox>
    </SideSearch>
    <TreeRow><Cell $w={7} $start><Chevron s={6} /></Cell><Mono>BCC 3D Objects</Mono></TreeRow>
    <TreeRow $bg="#333">
      <Cell $w={23} />
      <svg width="10" height="9" viewBox="0 0 10 9"><path d="M0 1.500h2V0h2v1.500h2V0h2v1.500h2V9H0z" fill="#aaa" /><path d="M2 3h2v4H2M2 5h2M6 3h2v2H6v2h2" fill="none" stroke="#333" strokeWidth=".8" /></svg>
      <Hit><Mono $c="#333">BCC Title Studio</Mono></Hit>
    </TreeRow>
    <SideFoot>
      <svg width="10" height="10" viewBox="0 0 10 10"><path d="M0 0h10v9.500H5.500V5H0z" fill="#bbb" /><path d="M0 6h4.500v3.500z" fill="#888" /></svg>
    </SideFoot>
    {['对齐', '库', '字符', '段落', '跟踪器', '内容识别填充'].map(t => <SideRow key={t}><Wide>{t}</Wide></SideRow>)}
  </Panel>
);

type Layer = { n: number; color: string; name: string; sel?: boolean; audio?: boolean; icon: React.ReactNode };
const layers: Layer[] = [
  { n: 1, color: '#e8c09c', name: '聚光 1', icon: <FaLightbulb size={9} color="#aaa" /> },
  { n: 2, color: '#b33a38', name: '[深灰色 纯色 1]', sel: true, icon: <svg width="13" height="13"><rect x=".5" y=".5" width="12" height="12" fill="#2b2b2b" stroke="#111" /></svg> },
  { n: 3, color: '#a8cbc8', name: '[bandicam 2019-12-20 10-25-28-090.mp4]', audio: true, icon: <svg width="9" height="11" viewBox="0 0 9 11"><path d="M0 0h6l3 3v8H0z" fill="#eee" /><path d="M1.500 6h6v3.500h-6zM1.500 5l5.500-2v1.500L1.500 6z" fill="#1d86d8" /></svg> },
];

const TimelineOutline = () => (
  <Outline>
    <TabRow $h={20}>
      <Tab $w={92}><Wide $ml={21}>渲染队列</Wide></Tab>
      <Tab $w={153} $active>
        <Cell $w={5}><Cross /></Cell><Swatch $c="#a8936f" $ml={7} $mr={9} /><Wide $c="#b5b5b5" $ls={0.480} $grow>明光魅影 已关联合成 30</Wide><Burger />
      </Tab>
    </TabRow>
    <TimeTop>
      <TimeCode><Wide $c={blue} $bold $size={11.200} $ls={0.200}>0:00:06:17</Wide><Mono $c="#234a72" $size={8.500} $ls={-0.620}>00197 (30.00 fps)</Mono></TimeCode>
      <Cell $w={3} />
      <SearchBox $w={427} $h={15} $mt={7}><Lens caret c="#aaa" /></SearchBox>
      <Cell $w={11} />
      <Cell $w={16}><svg width="13" height="10" viewBox="0 0 13 10" stroke="#aaa" fill="#aaa"><path d="M0 2.500h7M6 2v5h4" fill="none" /><path d="M4 1h3v2H4zM10 1.500h2.500v2H10zM10 6h2.500v2.500H10z" /></svg></Cell>
      <Cell $w={9} />
      <Cell $w={16}><svg width="13" height="13" viewBox="0 0 13 13" fill="none" stroke="#aaa"><circle cx="3" cy="3" r="1.700" fill="#aaa" /><path d="M3 0v6M0 3h6M8.500 4.500l4 2v4l-4 2-4-2v-4zM4.500 6.500l4 2 4-2M8.500 8.500v4" /></svg></Cell>
      <Cell $w={8} />
      <Cell $w={18}><ShyRow /></Cell><Cell $w={22}><Frames s={12} /></Cell><Cell $w={20}><Blur s={12} /></Cell>
      <Cell $w={33}><svg width="12" height="12" fill="none" stroke="#aaa"><rect x=".5" y="1.500" width="11" height="10" /><path d="M2 3c5 0 3 6 8 6" /></svg></Cell>
    </TimeTop>
    <Header>
      <Cell $w={15}><Eye /></Cell><Cell $w={10}><FaVolumeUp size={9} /></Cell><Cell $w={12}><svg width="6" height="6"><circle cx="3" cy="3" r="2.700" fill="#aaa" /></svg></Cell><Cell $w={12}><FaLock size={8} /></Cell>
      <Sep $l={4} $r={7} $h={10} /><Cell $w={14}><svg width="10" height="10" viewBox="0 0 10 10"><path d="M0 .5h4.500L9.800 6 6 9.800 0 4.500z" fill="#aaa" /><circle cx="2.200" cy="2.600" r=".9" fill="#333" /></svg></Cell><Sep $l={4} $r={2} $h={10} /><Cell $w={10}><Mono $size={8}>#</Mono></Cell>
      <Cell $w={16} /><Cell $w={251} $start><Wide>图层名称</Wide></Cell>
      <Cell $w={12}><Shy /></Cell><Cell $w={12}><Sun /></Cell><Cell $w={11}><Slash flip /></Cell><Cell $w={12}><Fx s={9} /></Cell>
      <Cell $w={12}><Frames s={9} /></Cell><Cell $w={12}><Blur /></Cell><Cell $w={11}><Half /></Cell><Cell $w={12}><Cube /></Cell>
      <Sep $l={9} $r={5} $h={10} />
      <Cell $w={50} $start><Wide>模式</Wide></Cell><Cell $w={13} $start $c="#888"><Wide $ls={0} $size={8.500}>T</Wide></Cell><Cell $w={43} $start $c="#888"><Wide $ls={0} $size={8.700}>TrkMat</Wide></Cell>
      <Sep $l={0} $r={4} $h={10} /><Wide>父级和链接</Wide>
    </Header>
    <Layers>
      {layers.map(l => (
        <LayerRow key={l.n} $sel={l.sel}>
          <Cell $w={15}><Eye /></Cell><Cell $w={10}>{l.audio && <FaVolumeUp size={9} />}</Cell><Box $r={2} /><Box $r={8} />
          <Cell $w={9}><Chevron s={6} dir="right" /></Cell><Cell $w={2} />
          <Swatch $c={l.color} $s={12} /><Cell $w={13}><Mono $bold>{l.n}</Mono></Cell>
          <Cell $w={13} /><Cell $w={16}>{l.icon}</Cell>
          <LayerName $sel={l.sel}><Mono $bold $size={9} $c={l.sel ? '#222' : '#aaa'} $ls={-0.120}>{l.name}</Mono></LayerName>
          <Cell $w={3} /><Cell $w={12}><Shy /></Cell>
          {l.n > 1 ? <><Cell $w={11}>{l.sel && <Box />}</Cell><Cell $w={12}><Slash /></Cell><Cell $w={12}>{l.sel && <Fx s={9} />}</Cell></> : <Cell $w={35} />}
          <Cell $w={12}>{l.n === 3 && <Box />}</Cell><Cell $w={12}>{l.n > 1 && <Box />}</Cell><Cell $w={12}><Box /></Cell><Cell $w={12}>{l.n > 1 && <Box />}</Cell>
          <Cell $w={12} />
          {l.n > 1 ? <Select $w={44} $c="#c8c8c8">正常<Chevron /></Select> : <Cell $w={44} />}
          <Cell $w={20}>{l.n > 1 && <Box />}</Cell>
          {l.n === 3 ? <Select $w={41} $c="#c8c8c8">无<Chevron /></Select> : <Cell $w={41} />}
          <Cell $w={22}><Spiral /></Cell>
          <Select $w={68} $c="#c8c8c8">无<Chevron /></Select>
        </LayerRow>
      ))}
    </Layers>
  </Outline>
);

const TimelineTracks = () => (
  <Tracks>
    <MiniScroll $ml={0} $w={304} $h={7} />
    <TickRow>
      <Tick $w={10}>29f</Tick>
      <Cell $w={20} />
      {['04', '09', '14', '19', '24'].map(n => <Tick key={n} $w={50.700}>{n}f</Tick>)}
      <Cell $w={13} /><Tick $w={16}>29f</Tick>
    </TickRow>
    <MiniScroll $ml={0} $w={304} $h={12} $bg="#606060" />
    <TrackArea>
      <Clip $c="#938070" $w={294} />
      <Clip $c="#a64443" $w={294} $top="#d09090" />
      <Clip $c="#748683" $w={299} />
    </TrackArea>
  </Tracks>
);

export default function App() {
  return (
    <Window>
      <Global />
      <TitleBar>
        <AppBadge>Ae</AppBadge><Wide $ls={0} $size={9.720}>Adobe After Effects 2020 - G:\Temp\无标题项目.aep *</Wide>
        <WindowButtons>
          <svg width="9" height="9"><path d="M.5 5h8" stroke="#fff" /></svg>
          <svg width="9" height="9"><rect x=".5" y=".5" width="8" height="8" fill="none" stroke="#fff" /></svg>
          <svg width="9" height="9"><path d="M.5.500l8 8M8.500.500l-8 8" stroke="#fff" /></svg>
        </WindowButtons>
      </TitleBar>
      <MenuBar>{menu.map(([t, w]) => <MenuItem key={t} $w={w}>{t}</MenuItem>)}</MenuBar>
      <Tools />
      <Panels><EffectControls /><Viewer /><SidePanels /></Panels>
      <Timeline>
        <TLBody>
          <TimelineOutline /><TimelineTracks />
          <Markers>
            <svg width="9" height="12"><path d="M0 0h9v7L4.500 11.500 0 7z" fill="#aaa" /></svg><Recycle />
          </Markers>
        </TLBody>
        <Footer>
          <Cell $w={3} /><Cell $w={14} $c={blue}><svg width="10" height="10" fill="none" stroke={blue}><rect x="1" y="1" width="6" height="6" /><rect x="3.500" y="3.500" width="5" height="5" /></svg></Cell>
          <Cell $w={14}><svg width="10" height="10" fill="none" stroke={blue}><circle cx="3.500" cy="3.500" r="2.500" /><rect x="4" y="4" width="5" height="5" /></svg></Cell>
          <Cell $w={14}><svg width="8" height="9" fill="none" stroke="#aaa" strokeWidth="1.300"><path d="M3 0 1 2v5l2 2M5 0l2 2v5L5 9M4 2v5" /></svg></Cell>
          <Cell $w={636} />
          <Cell $w={10}><svg width="8" height="4"><path d="M0 3.500 4 1l4 2.500z" fill="#aaa" /></svg></Cell><Cell $w={6} />
          <svg width="38" height="9"><path d="M4 4h34" stroke="#3a3a3a" strokeWidth="2" /><circle cx="4.500" cy="4.500" r="3.500" fill="#232323" stroke="#aaa" /></svg>
          <Cell $w={28}><svg width="12" height="7"><path d="M0 6.500 3 2l2 2 3-4 4 6.500z" fill="#aaa" /></svg></Cell>
          <Scroll />
        </Footer>
      </Timeline>
      <Overlay $x={599} $y={440} width="30" height="30" viewBox="600 440 30 30">
        <path d="M607.500 443v7" stroke="#d33" /><path d="M603 452h9v6l-4.500 4-4.500-4z" fill={blue} /><path d="M607.500 457v5" stroke="#8a2020" /><path d="M607 464h20" stroke="#1fc01f" strokeWidth="2" />
      </Overlay>
      <Overlay $x={860} $y={530} width="24" height="208" viewBox="861 530 24 208">
        <path d="M869 569h9v168h-9z" fill="#fff" opacity=".11" /><path d="M869 567h9" stroke="#1fc01f" strokeWidth="2" />
        <path d="M868.500 531v7" stroke="#7ab4ee" /><path d="M864 542h9v6l-4.500 4-4.500-4z" fill={blue} /><path d="M868.500 547v190" stroke={blue} />
      </Overlay>
      <Overlay $x={139} $y={190} width="80" height="125" viewBox="140 190 80 125">
        <path d="M144 194l23.700 17.300-8.700 3L213 307.500a4 4 0 0 1-6.500 4L154 217.300l-5.700 6z" fill="#ed1c24" />
      </Overlay>
      <Overlay $x={759} $y={640} width="200" height="100" viewBox="760 640 200 100">
        <g fill="#ccc" fontFamily="Liberation Sans" fontWeight="700">
          <text x="767" y="701" fontSize="39" textLength="61" lengthAdjust="spacingAndGlyphs" stroke="#ccc" strokeWidth="1.200">Bai</text>
          <ellipse cx="835" cy="668" rx="7" ry="8.500" /><ellipse cx="848" cy="655" rx="6.300" ry="8.700" /><ellipse cx="863.500" cy="656.500" rx="6.500" ry="8.500" transform="rotate(10 863.500 656.500)" /><ellipse cx="873.500" cy="671.500" rx="6.500" ry="8.500" />
          <path d="M854 669c-6 0-9 5-12 9-4 5-10 8-10 15 0 6 4 9 9 9 5 0 8-1 13-1s8 1 13 1c6 0 9-4 9-9 0-7-6-10-10-15-3-4-6-9-12-9z" />
          <text x="839" y="697" fontSize="21" fill="#333" textLength="29" lengthAdjust="spacingAndGlyphs">du</text>
          <text x="882" y="699" fontSize="31" fontFamily="Noto Sans CJK SC" textLength="61" stroke="#ccc" strokeWidth=".6">经验</text>
          <text x="768" y="725" fontSize="21.500" fontWeight="400" fontFamily="Noto Sans" textLength="177" stroke="#ccc" strokeWidth=".3">jingyan.baidu.com</text>
        </g>
      </Overlay>
      <Overlay $x={997} $y={24} width="2" height="729"><path d="M1 16v713" stroke="#606060" strokeWidth="2" /></Overlay>
    </Window>
  );
}
